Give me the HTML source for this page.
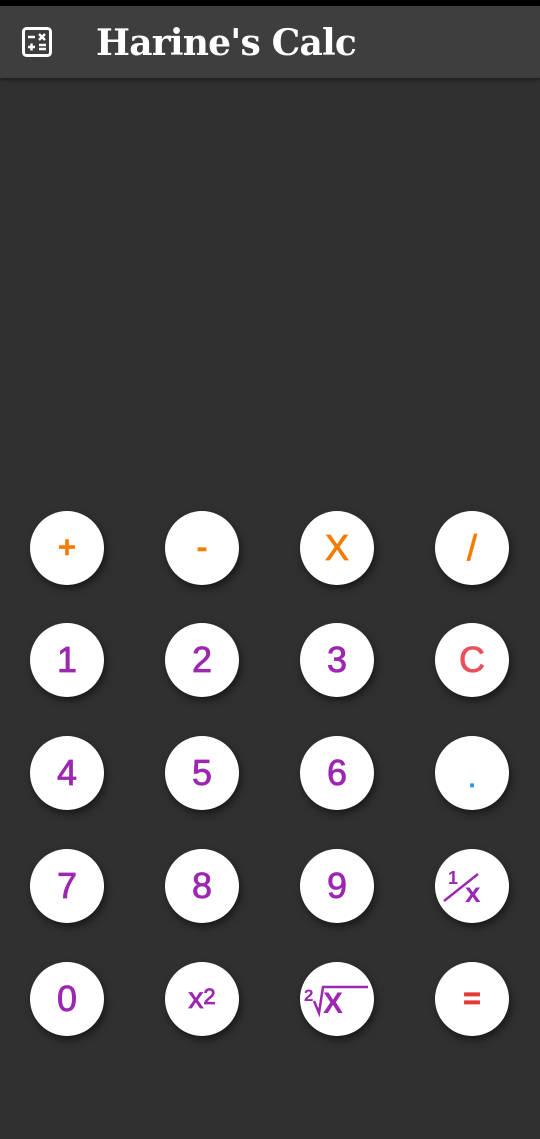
<!DOCTYPE html>
<html><head><style>
body{margin:0;width:540px;height:1139px;background:#303030;position:relative;overflow:hidden;font-family:"Liberation Sans",sans-serif}
.sb{position:absolute;left:0;top:0;width:540px;height:6px;background:#000}
.tb{position:absolute;left:0;top:6px;width:540px;height:72px;background:#3e3e3e;box-shadow:0 2px 4px rgba(0,0,0,.4)}
.t{position:absolute;left:96px;top:19px;color:#fff;font-family:"DejaVu Serif","Liberation Serif",serif;font-weight:bold;font-size:36px;line-height:48px;letter-spacing:-0.8px}
.b{position:absolute;width:74px;height:74px;border-radius:50%;background:#fff;box-shadow:2px 4px 8px rgba(0,0,0,.5);display:flex;align-items:center;justify-content:center;font-size:36px;color:#9c27b0;-webkit-text-stroke:0.8px currentColor}
.o{color:#f57c00}
</style></head><body>
<div class="sb"></div>
<div class="tb"></div>
<svg style="position:absolute;left:22px;top:27px" width="30" height="30" viewBox="0 0 30 30"><rect x="1.5" y="1.5" width="27" height="27" rx="3" fill="none" stroke="#fff" stroke-width="3"/><g stroke="#fff" stroke-width="2.5"><line x1="6" y1="10" x2="13" y2="10"/><line x1="17" y1="7" x2="23" y2="13"/><line x1="23" y1="7" x2="17" y2="13"/><line x1="6" y1="20" x2="13" y2="20"/><line x1="9.5" y1="16.5" x2="9.5" y2="23.5"/><line x1="17" y1="18" x2="24" y2="18"/><line x1="17" y1="22" x2="24" y2="22"/></g></svg>
<div class="t">Harine's Calc</div>

<div class="b o" style="left:30px;top:511px;font-size:30px;-webkit-text-stroke:1.5px currentColor">+</div>
<div class="b o" style="left:165px;top:511px;font-size:30px;-webkit-text-stroke:1.5px currentColor">-</div>
<div class="b o" style="left:300px;top:511px">X</div>
<div class="b o" style="left:435px;top:511px">/</div>

<div class="b" style="left:30px;top:623px">1</div>
<div class="b" style="left:165px;top:623px">2</div>
<div class="b" style="left:300px;top:623px">3</div>
<div class="b" style="left:435px;top:623px;color:#e8505b">C</div>

<div class="b" style="left:30px;top:736px">4</div>
<div class="b" style="left:165px;top:736px">5</div>
<div class="b" style="left:300px;top:736px">6</div>
<div class="b" style="left:435px;top:736px;color:#2196f3;font-size:30px;padding-top:10px;box-sizing:border-box">.</div>

<div class="b" style="left:30px;top:849px">7</div>
<div class="b" style="left:165px;top:849px">8</div>
<div class="b" style="left:300px;top:849px">9</div>
<div class="b" style="left:435px;top:849px;-webkit-text-stroke:0"><svg width="60" height="44" viewBox="0 0 60 44"><text x="6" y="20" font-size="18" fill="#9c27b0" font-family="Liberation Sans" font-weight="bold">1</text><line x1="2" y1="37" x2="36" y2="10" stroke="#9c27b0" stroke-width="2.5"/><text x="23" y="38" font-size="28" fill="#9c27b0" font-family="Liberation Sans" font-weight="bold">x</text></svg></div>

<div class="b" style="left:30px;top:962px">0</div>
<div class="b" style="left:165px;top:962px;font-size:30px">x<sup style="font-size:22px;position:relative;top:-2px">2</sup></div>
<div class="b" style="left:300px;top:962px;-webkit-text-stroke:0"><svg width="66" height="44" viewBox="0 0 66 44"><text x="0" y="24" font-size="17" fill="#9c27b0" font-family="Liberation Sans" font-weight="bold">2</text><polyline points="10,24 15,36 19,10 64,10" fill="none" stroke="#9c27b0" stroke-width="2.5"/><text x="19" y="36" font-size="30" fill="#9c27b0" font-family="Liberation Sans" font-weight="bold">X</text></svg></div>
<div class="b" style="left:435px;top:962px;color:#e53935;font-size:30px;font-weight:bold">=</div>
</body></html>
